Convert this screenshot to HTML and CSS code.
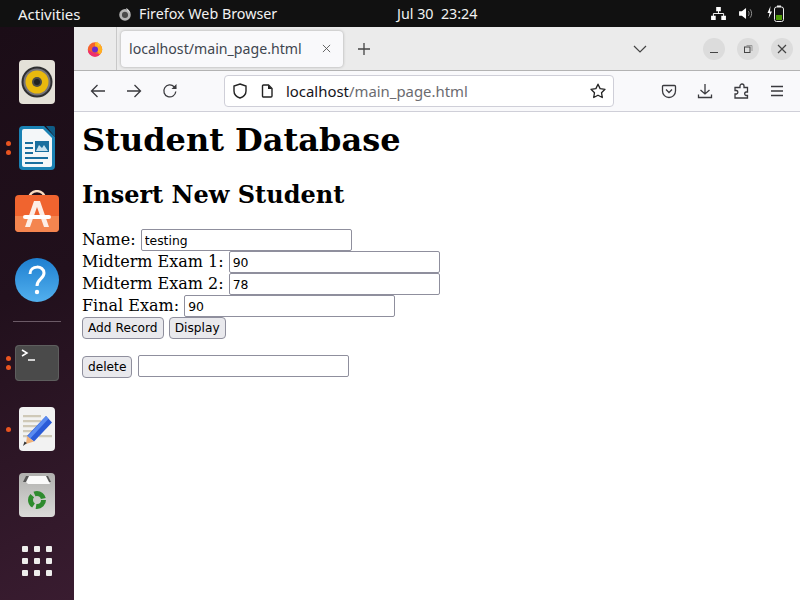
FILE: index.html
```html
<!DOCTYPE html>
<html lang="en">
<head>
<meta charset="utf-8">
<title>localhost/main_page.html</title>
<link rel="stylesheet" href="styles.css">
</head>
<body>
<header class="topbar">
  <span class="activities">Activities</span>
  <span class="appmenu">
    <svg class="ff-mono" viewBox="0 0 16 16"><circle cx="8" cy="9" r="6.6" fill="#b5b5b5"/><path d="M8 5.500a3.500 3.500 0 1 0 3.500 3.500c0-1.600-1-3-2.500-3.300z" fill="#4a4a4a"/><path d="M9 1c2.500 1 4.500 3 5 6l-3-2.500z" fill="#d8d8d8"/></svg>
    Firefox Web Browser
  </span>
  <span class="clock">Jul 30&nbsp; 23:24</span>
  <span class="tray">
    <svg class="tray-net" viewBox="0 0 16 14"><path d="M5.500 0h5v4.500h-5zM0 9.500h5V14H0zM11 9.500h5V14h-5z" fill="#fff"/><path d="M8 4v3M2.500 10V7h11v3" stroke="#fff" fill="none"/></svg>
    <svg class="tray-vol" viewBox="0 0 16 14"><path d="M0 4.500h3L7.500 1v12L3 9.500H0z" fill="#fff"/><path d="M10 4.500c1 1.500 1 3.500 0 5M12 2.500c2 2.500 2 6.500 0 9" stroke="#999" fill="none"/></svg>
    <svg class="tray-bat" viewBox="0 0 17 17"><path d="M3.500 1 .5 8h2L1.500 13.500 5 6.500H3z" fill="#fff"/><rect x="7.500" y="2" width="9" height="14.500" rx="2" fill="none" stroke="#eee"/><rect x="10" y=".5" width="4" height="1.500" fill="#eee"/><rect x="9" y="10" width="6" height="5" fill="#4e9a06"/></svg>
  </span>
</header>
<div class="desktop">
  <nav class="dock">
    <div class="dock-item">
      <svg class="icon36" viewBox="0 0 36 44"><rect width="36" height="44" rx="4" fill="#e4e1d8"/><circle cx="18" cy="22" r="15.500" fill="#2f2f30"/><circle cx="18" cy="22" r="13.500" fill="#77757a"/><circle cx="18" cy="22" r="11.500" fill="#e9b90e"/><circle cx="18" cy="22" r="5" fill="#4a4a48"/><circle cx="18" cy="22" r="3" fill="#222"/></svg>
    </div>
    <div class="dock-item">
      <span class="dots"><i class="dot"></i><i class="dot"></i></span>
      <svg class="icon36" viewBox="0 0 36 44"><path d="M4 0h21l11 11v29a4 4 0 0 1-4 4H4a4 4 0 0 1-4-4V4a4 4 0 0 1 4-4z" fill="#1a82b4"/><path d="M5 3h19l9 9v27a2 2 0 0 1-2 2H5a2 2 0 0 1-2-2V5a2 2 0 0 1 2-2z" fill="#f4f7f9"/><path d="M27 0h7a2 2 0 0 1 2 2v9z" fill="#0f5c86"/><path d="M6 16h8v2H6zM6 21h8v2H6zM6 26h8v2H6zM6 31h23v2H6zM6 36h18v2H6z" fill="#1a6f9f"/><rect x="16" y="15" width="14" height="11" fill="#1a6f9f"/><path d="M17 25l3-6 3 3 2-3 4 6z" fill="#c6e1ef"/></svg>
    </div>
    <div class="dock-item">
      <svg class="icon44 store" viewBox="0 0 44 44"><path d="M14 9c0-10.500 16-10.500 16 0" fill="none" stroke="#f8dcc0" stroke-width="2.400"/><rect y="5" width="44" height="37" rx="4" fill="#f0642f"/><path d="M0 26h44v12a4 4 0 0 1-4 4H4a4 4 0 0 1-4-4z" fill="#f4854f"/><path d="M19 11h6l9 26h-5l-7-20-7 20h-5z" fill="#fdeee6"/><rect x="8" y="25" width="28" height="4" rx="2" fill="#fff"/></svg>
    </div>
    <div class="dock-item">
      <svg class="icon44" viewBox="0 0 44 44"><defs><linearGradient id="helpg" x1="0" y1="0" x2="0" y2="1"><stop offset="0" stop-color="#1e7fd0"/><stop offset="1" stop-color="#52b0ee"/></linearGradient></defs><circle cx="22" cy="22" r="22" fill="url(#helpg)"/><path d="M15 16c0-9 14-9 14-1 0 6-7 6-7 13" fill="none" stroke="#fff" stroke-width="3"/><circle cx="22" cy="34" r="2.200" fill="#fff"/></svg>
    </div>
    <hr class="dock-sep">
    <div class="dock-item">
      <span class="dots"><i class="dot"></i><i class="dot"></i></span>
      <svg class="icon44 term" viewBox="0 0 44 36"><rect width="44" height="36" rx="4" fill="#4a4a4a"/><rect x=".5" y=".5" width="43" height="35" rx="3.500" fill="none" stroke="#5e5e5e"/><path d="M7 5l5 3-5 3" fill="none" stroke="#fff" stroke-width="1.500"/><path d="M13 15h7" stroke="#fff" stroke-width="1.500"/></svg>
    </div>
    <div class="dock-item">
      <span class="dots"><i class="dot"></i></span>
      <svg class="icon36" viewBox="0 0 36 44"><rect width="36" height="44" rx="4" fill="#f2f2f2"/><path d="M4 8h18v2.200H4zM4 13h18v2.200H4zM4 18h16v2.200H4zM4 23h12v2.200H4zM4 28h8v2.200H4zM20 28h13v2.200H20z" fill="#cfc9b8"/><path d="M27 9l6 6.500-18 19-7-5.500z" fill="#2a5bd7"/><path d="M27 9l2.500 2.800-18 19.500-3.500-1.300z" fill="#5a8bf0"/><path d="M8 29l7 5.500-8 2.500z" fill="#f0b27a"/><path d="M4 39l4-3-2.500-1.500z" fill="#333"/></svg>
    </div>
    <div class="dock-item">
      <svg class="icon36" viewBox="0 0 36 44"><defs><linearGradient id="trashg" x1="0" y1="0" x2="0" y2="1"><stop offset="0" stop-color="#b0b0ae"/><stop offset="1" stop-color="#dadad8"/></linearGradient></defs><rect width="36" height="44" rx="4" fill="url(#trashg)"/><path d="M4 9l3-6h22l3 6z" fill="#555"/><path d="M7 9l3-6h17l4 8H9z" fill="#fafafa"/><circle cx="18" cy="27" r="6.500" fill="none" stroke="#2e8b2e" stroke-width="5" stroke-dasharray="11 2.600"/></svg>
    </div>
    <div class="dock-item">
      <div class="appgrid"><i></i><i></i><i></i><i></i><i></i><i></i><i></i><i></i><i></i></div>
    </div>
  </nav>
  <main class="window">
    <div class="tabbar">
      <div class="ff-slot">
        <svg class="ff" viewBox="0 0 16 16"><circle cx="8" cy="8.500" r="7.200" fill="#f5632d"/><path d="M8 1.300a7.200 7.200 0 0 1 7.200 7.200c0 2-1 4-2.500 5L8 8z" fill="#ffb01f"/><path d="M.8 9a7.200 7.200 0 0 0 7.200 6.700c2 0 3.500-.7 4.800-2L5 11z" fill="#ee2f6e"/><circle cx="8" cy="8.500" r="3" fill="#6b2bd0"/><path d="M10 .5l3.500 3.500-2.500 1z" fill="#ffc53d"/></svg>
      </div>
      <div class="tab">
        <span class="tab-title">localhost/main_page.html</span>
        <svg class="tab-x" viewBox="0 0 10 10"><path d="M1 1l8 8M9 1l-8 8" stroke="#555" stroke-width="1" fill="none"/></svg>
      </div>
      <svg class="newtab" viewBox="0 0 12 12"><path d="M6 0v12M0 6h12" stroke="#444" stroke-width="1.300"/></svg>
      <svg class="tabs-menu" viewBox="0 0 14 8"><path d="M1 1l6 6 6-6" fill="none" stroke="#444" stroke-width="1.200"/></svg>
      <div class="winbtn"><svg class="wb" viewBox="0 0 10 10"><path d="M1 8.500h8" stroke="#444" stroke-width="1"/></svg></div>
      <div class="winbtn"><svg class="wb" viewBox="0 0 10 10"><rect x="1.500" y="3" width="5.500" height="5.500" fill="none" stroke="#444"/><path d="M3.500 1.500H9V7" fill="none" stroke="#999"/></svg></div>
      <div class="winbtn"><svg class="wb" viewBox="0 0 10 10"><path d="M1 1l8 8M9 1l-8 8" stroke="#444" stroke-width="1.200"/></svg></div>
    </div>
    <div class="navbar">
      <svg class="nav-ic" viewBox="0 0 16 16"><path d="M15 8H1.500M7.500 2l-6 6 6 6" fill="none" stroke="#3a3a3e" stroke-width="1.300"/></svg>
      <svg class="nav-ic" viewBox="0 0 16 16"><path d="M1 8h13.500M8.500 2l6 6-6 6" fill="none" stroke="#3a3a3e" stroke-width="1.300"/></svg>
      <svg class="nav-ic" viewBox="0 0 16 16"><path d="M13.800 8.500a6 6 0 1 1-1.700-4.800L14 5.500" fill="none" stroke="#3a3a3e" stroke-width="1.300"/><path d="M14.500 1v5h-5z" fill="#3a3a3e"/></svg>
      <div class="urlbar">
        <svg class="url-shield" viewBox="0 0 16 16"><path d="M8 1l6 2v5c0 4-3 6-6 7-3-1-6-3-6-7V3z" fill="none" stroke="#222" stroke-width="1.400"/></svg>
        <svg class="url-page" viewBox="0 0 12 14"><path d="M1.500 2a1 1 0 0 1 1-1h5L11 4.500V12a1 1 0 0 1-1 1H2.500a1 1 0 0 1-1-1z" fill="none" stroke="#222" stroke-width="1.400"/><path d="M7 1v4h4z" fill="#222"/></svg>
        <span class="url-text"><b class="url-host">localhost</b>/main_page.html</span>
        <svg class="url-star" viewBox="0 0 16 16"><path d="M8 1.200l2.100 4.400 4.900.7-3.500 3.400.8 4.800L8 12.200l-4.300 2.300.8-4.800L1 6.300l4.900-.7z" fill="none" stroke="#222" stroke-width="1.300" stroke-linejoin="round"/></svg>
      </div>
      <div class="tools">
        <svg class="nav-ic" viewBox="0 0 16 16"><path d="M2.500 2.500h11a1 1 0 0 1 1 1V8a6.500 6.500 0 0 1-13 0V3.500a1 1 0 0 1 1-1z" fill="none" stroke="#3a3a3e" stroke-width="1.300"/><path d="M5 6.500l3 3 3-3" fill="none" stroke="#3a3a3e" stroke-width="1.300"/></svg>
        <svg class="nav-ic" viewBox="0 0 16 16"><path d="M8 1v10M3.500 7L8 11l4.500-4M1.500 11.500v3h13v-3" fill="none" stroke="#3a3a3e" stroke-width="1.300"/></svg>
        <svg class="nav-ic" viewBox="0 0 16 16"><path d="M7 3a2 2 0 0 1 4 0v1.500h3.500V9H13a1.800 1.800 0 0 0 0 3.500h1.500V15H2v-4h1.500a1.800 1.800 0 0 0 0-3.500H2V4.500h5z" fill="none" stroke="#3a3a3e" stroke-width="1.300"/></svg>
        <svg class="nav-ic" viewBox="0 0 16 16"><path d="M2 3.500h12M2 8h12M2 12.500h12" stroke="#3a3a3e" stroke-width="1.300"/></svg>
      </div>
    </div>
    <section class="page">
      <h1 class="page-title">Student Database</h1>
      <h2 class="page-sub">Insert New Student</h2>
      <form class="student-form">
        Name: <input class="field" type="text" value="testing"><br>
        Midterm Exam 1: <input class="field" type="text" value="90"><br>
        Midterm Exam 2: <input class="field" type="text" value="78"><br>
        Final Exam: <input class="field" type="text" value="90"><br>
        <button class="btn" type="button">Add Record</button>
        <button class="btn" type="button">Display</button>
      </form>
      <form class="delete-form">
        <button class="btn" type="button">delete</button>
        <input class="field" type="text">
      </form>
    </section>
  </main>
</div>
</body>
</html>
```
FILE: styles.css
```css
* { box-sizing: border-box; }
html, body { margin: 0; height: 100%; overflow: hidden; }
body { width: 800px; height: 600px; display: flex; flex-direction: column; font-family: "Noto Sans", sans-serif; }

.topbar { height: 27px; flex: none; background: #111; color: #f2f2f2; font-size: 14.3px; display: flex; align-items: center; padding-left: 18px; }
.activities { width: 100px; font-size: 15px; }
.appmenu { width: 279px; display: flex; align-items: center; gap: 7px; }
.ff-mono { width: 14px; height: 14px; }
.clock { width: 240px; }
.tray { display: flex; align-items: center; }
.tray-net { width: 15px; height: 13px; margin-left: 74px; }
.tray-vol { width: 15px; height: 13px; margin-left: 13px; }
.tray-bat { width: 17px; height: 17px; margin-left: 13px; }

.desktop { flex: 1; display: flex; min-height: 0; }
.dock { width: 74px; flex: none; padding-top: 22px; background: linear-gradient(155deg, #1b0d17 0%, #21101c 45%, #391c30 100%); display: flex; flex-direction: column; align-items: center; }
.dock-item { position: relative; height: 66px; width: 74px; display: flex; align-items: center; justify-content: center; }
.icon36 { width: 36px; height: 44px; }
.icon44 { width: 44px; height: 44px; }
.icon44.term { height: 36px; }
.icon44.store { margin-bottom: 4px; }
.dock-sep { width: 48px; height: 1px; margin: 8px 0; border: 0; background: #6b5a66; }
.dots { position: absolute; left: 5.500px; top: 0; bottom: 0; display: flex; flex-direction: column; justify-content: center; gap: 4px; }
.dot { display: block; width: 5px; height: 5px; border-radius: 50%; background: #e95420; }
.appgrid { display: grid; grid-template-columns: repeat(3, 6px); grid-auto-rows: 6px; gap: 6px; }
.appgrid i { background: #eeeeec; border-radius: 1px; }

.window { flex: 1; min-width: 0; display: flex; flex-direction: column; background: #fff; }
.tabbar { height: 44px; flex: none; background: #ebebeb; border-bottom: 1px solid #b3b3b3; display: flex; align-items: center; }
.ff-slot { width: 43px; height: 43px; border-right: 1px solid #c8c8c8; display: flex; align-items: center; justify-content: center; padding-right: 1px; }
.ff { width: 16px; height: 16px; }
.tab { width: 222px; height: 36px; margin-left: 4px; background: #f9f9fb; border-radius: 4px; box-shadow: 0 0 3px rgba(0,0,0,.3); display: flex; align-items: center; padding-left: 8px; }
.tab-title { width: 193px; font-size: 14.15px; color: #3f4650; white-space: nowrap; }
.tab-x { width: 9px; height: 9px; }
.newtab { width: 12px; height: 12px; margin-left: 15px; }
.tabs-menu { width: 14px; height: 8px; margin-left: 263px; }
.winbtn { width: 22px; height: 22px; flex: none; border-radius: 50%; background: #dcdcdc; display: flex; align-items: center; justify-content: center; margin-left: 12px; }
.tabs-menu + .winbtn { margin-left: 56px; }
.wb { width: 10px; height: 10px; }

.navbar { height: 41px; flex: none; background: #f9f9fb; border-bottom: 1px solid #cfcfd8; display: flex; align-items: center; padding-left: 16px; gap: 20px; }
.nav-ic { width: 16px; height: 16px; flex: none; }
.urlbar { width: 390px; height: 32px; margin-left: 26px; background: #fff; border: 1px solid #cfcfd8; border-radius: 4px; display: flex; align-items: center; padding-left: 7px; }
.url-shield { width: 16px; height: 16px; }
.url-page { width: 12px; height: 14px; margin-left: 13px; }
.url-text { width: 304px; margin-left: 13px; font-size: 14.9px; color: #6b6b70; white-space: nowrap; }
.url-host { font-weight: 400; color: #15141a; }
.url-star { width: 16px; height: 16px; }
.tools { display: flex; align-items: center; gap: 20px; margin-left: 27px; }

.page { flex: 1; padding: 9px 8px 0; font-family: "DejaVu Serif", serif; font-size: 16px; color: #000; }
.page-title { margin: 0 0 21.440px; font-size: 32px; font-weight: 700; }
.page-sub { margin: 0 0 19.920px; font-size: 24px; font-weight: 700; }
.student-form { margin: 0 0 16px; }
.delete-form { margin: 0; }
.field { width: 211px; height: 22px; padding: 1px 3px; border: 1px solid #8f8f9d; border-radius: 2px; background: #fff; color: #000; font: 12.4px "DejaVu Sans", sans-serif; vertical-align: baseline; }
.btn { height: 22px; padding: 0 5px; border: 1px solid #8f8f9d; border-radius: 4px; background: #e9e9ed; color: #000; font: 12.2px "DejaVu Sans", sans-serif; }
```
